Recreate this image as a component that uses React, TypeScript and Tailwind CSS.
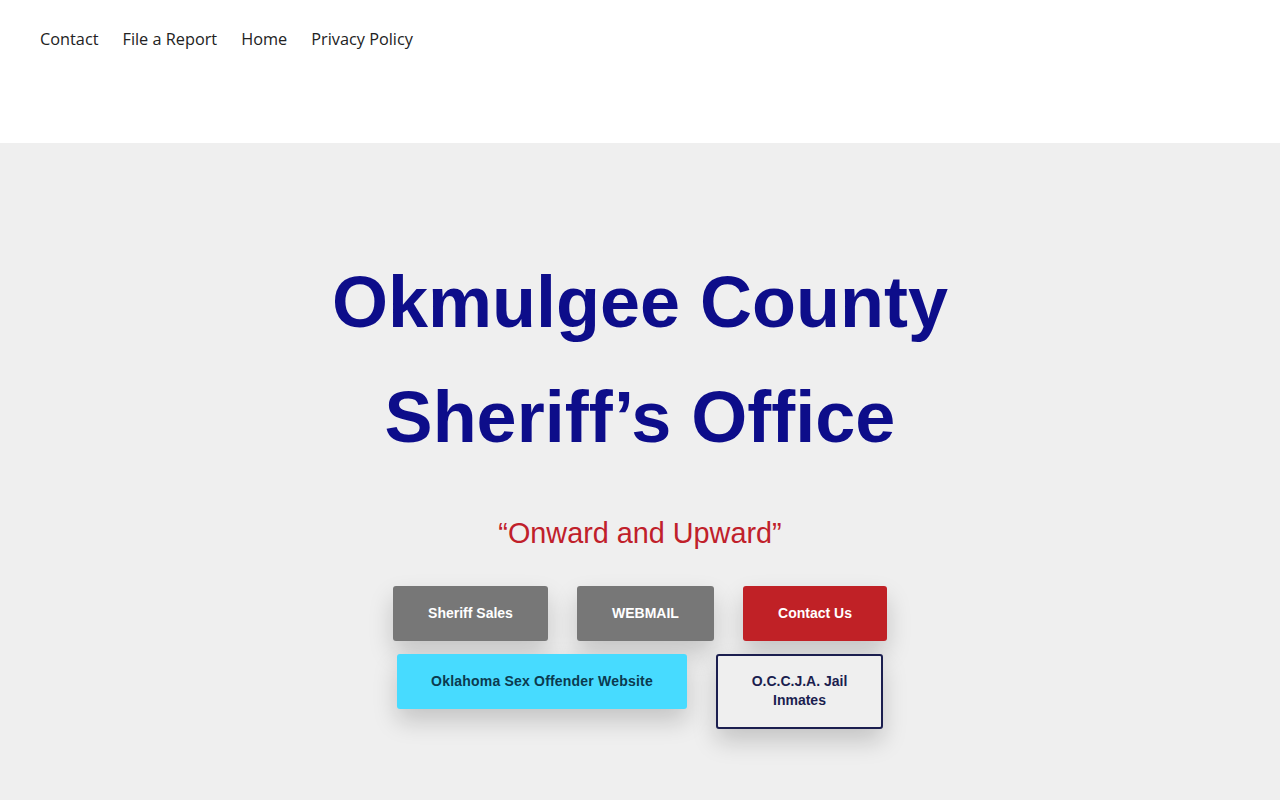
import React from "react";

const navLinks = ["Contact", "File a Report", "Home", "Privacy Policy"];

const btnBase =
  "inline-flex items-center justify-center text-center text-[14px] font-bold leading-[19px] rounded-[3px] shadow-[0_12px_24px_rgba(0,0,0,0.18)]";

export default function App() {
  return (
    <div className="min-h-[800px] bg-[#efefef] font-['Liberation_Sans',Arial,sans-serif]">
      <header className="h-[143px] bg-white">
        <nav className="flex gap-6 px-10 pt-[27px] font-['Open_Sans','Noto_Sans',sans-serif] text-[16.3px] leading-6 text-[#222]">
          {navLinks.map((l) => (
            <a key={l} href="#" className="hover:underline">
              {l}
            </a>
          ))}
        </nav>
      </header>

      <section className="flex flex-col items-center pt-[102px] pb-16">
        <h1 className="text-center text-[72px] font-bold leading-[1.6] text-[#0d0d8a]">
          Okmulgee County
          <br />
          Sheriff’s Office
        </h1>
        <p className="mt-[37px] text-[28.8px] leading-[1.5] text-[#c0202a]">
          “Onward and Upward”
        </p>

        <div className="mt-[30px] flex flex-col items-center gap-[13px]">
          <div className="flex items-start gap-[29px]">
            <a href="#" className={`${btnBase} h-[55px] w-[155px] bg-[#777777] text-white`}>
              Sheriff Sales
            </a>
            <a href="#" className={`${btnBase} h-[55px] w-[137px] bg-[#777777] text-white`}>
              WEBMAIL
            </a>
            <a href="#" className={`${btnBase} h-[55px] w-[144px] bg-[#c02126] text-white`}>
              Contact Us
            </a>
          </div>
          <div className="flex items-start gap-[29px]">
            <a href="#" className={`${btnBase} h-[55px] w-[290px] bg-[#47dbff] text-[#0b3a4f] tracking-[0.2px]`}>
              Oklahoma Sex Offender Website
            </a>
            <a
              href="#"
              className={`${btnBase} h-[75px] w-[167px] border-2 border-[#1b1e4f] bg-[#efefef] px-6 text-[#1b1e4f]`}
            >
              O.C.C.J.A. Jail Inmates
            </a>
          </div>
        </div>
      </section>
    </div>
  );
}
